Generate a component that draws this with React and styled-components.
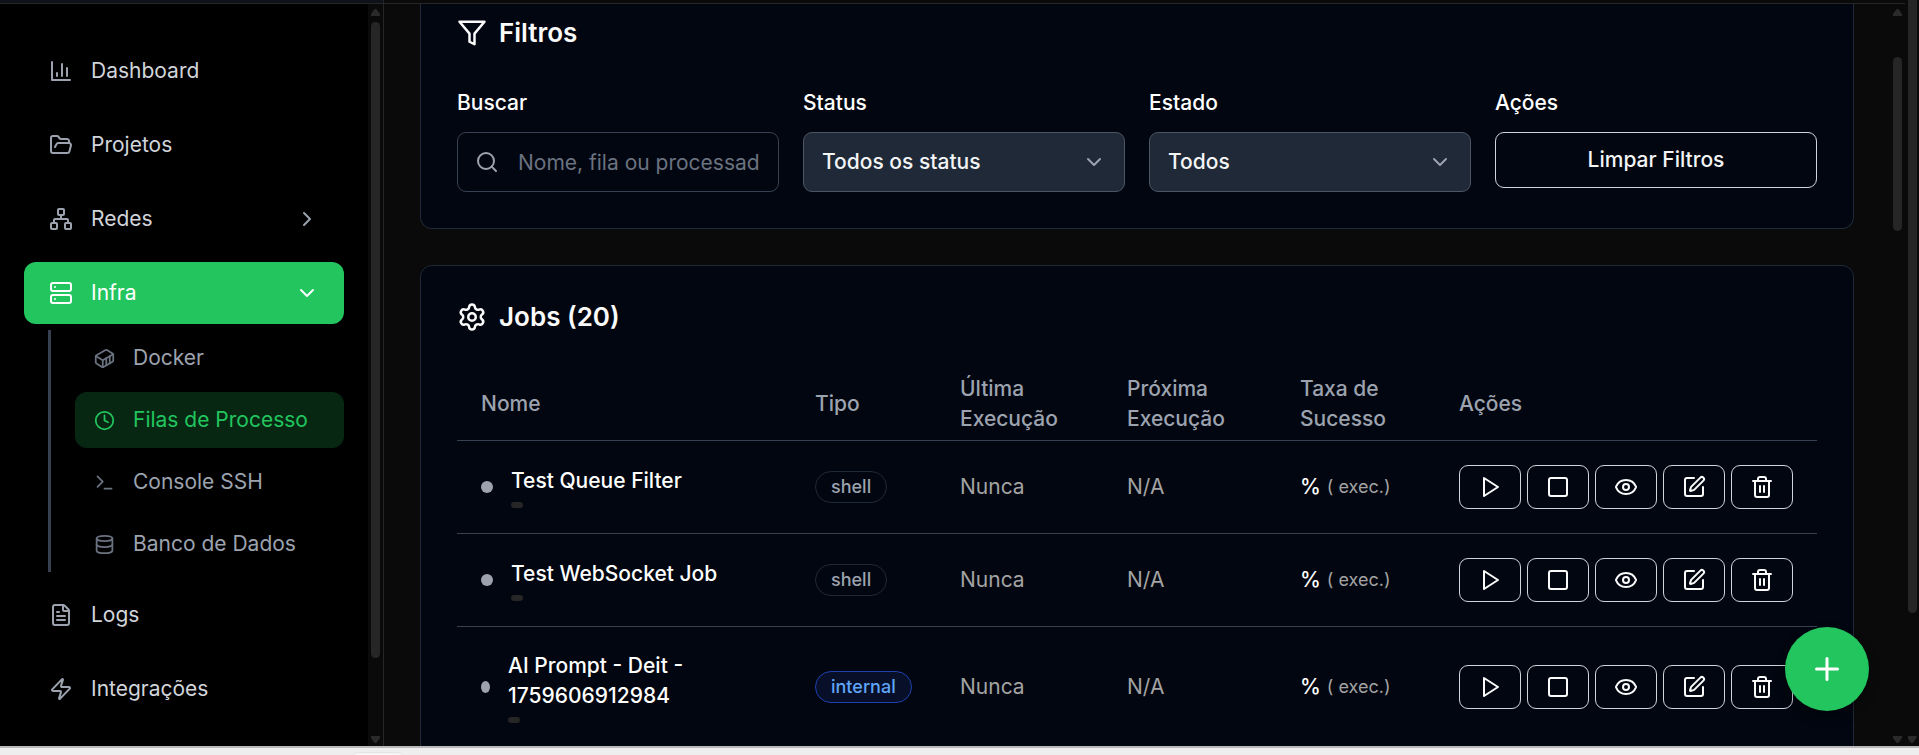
import React from "react";
import styled, { createGlobalStyle, css } from "styled-components";
import {
  FolderOpen, Network, Server, Container, Clock, Terminal, Database,
  FileText, Zap, ChevronRight, ChevronDown, Settings, Search, Square, Eye,
  SquarePen, Trash2, Plus,
} from "lucide-react";

const GlobalStyle = createGlobalStyle`
  *, *::before, *::after { box-sizing: border-box; }
  body {
    margin: 0;
    background: #0a0a0a;
    color: #fafafa;
    font-family: Inter, "Liberation Sans", sans-serif;
    font-size: 21px;
    line-height: 30px;
    overflow: hidden;
  }
  button, input, select { font: inherit; color: inherit; }
  svg { flex-shrink: 0; display: block; }
`;

const Page = styled.div`
  display: flex;
  flex-direction: column;
  height: 100vh;
`;

const Window = styled.div`
  flex: 1;
  min-height: 0;
  display: flex;
`;

const Shell = styled.div`
  flex: 1;
  min-width: 0;
  display: flex;
  flex-direction: column;
`;

const TopEdge = styled.div`
  display: flex;
  height: 4px;
  border-bottom: 1px solid #262626;
`;

const TopEdgeBrand = styled.div`
  width: 384px;
  background: #0d1318;
  border-right: 1px solid #262626;
`;

const Body = styled.div`
  flex: 1;
  min-height: 0;
  display: flex;
`;

const Sidebar = styled.aside`
  width: 384px;
  flex-shrink: 0;
  display: flex;
  background: #000;
  border-right: 1px solid #262626;
`;

const Nav = styled.nav`
  flex: 1;
  min-width: 0;
  display: flex;
  flex-direction: column;
  gap: 12px;
  padding: 36px 24px;
  overflow: hidden;
`;

const NavLink = styled.a`
  display: flex;
  align-items: center;
  gap: 18px;
  flex-shrink: 0;
  height: 62px;
  padding: 0 25px;
  border-radius: 12px;
  color: ${(p) => (p.$active ? "#fff" : "#d1d5db")};
  background: ${(p) => (p.$active ? "#22c55e" : "transparent")};
  text-decoration: none;

  span { flex: 1; }
  svg { color: ${(p) => (p.$active ? "#fff" : "#9ca3af")}; }
`;

const NavGroup = styled.div`
  display: flex;
  flex-direction: column;
  gap: 6px;
`;

const SubNav = styled.div`
  display: flex;
  flex-direction: column;
  gap: 6px;
  margin-left: 24px;
  padding-left: 24px;
  border-left: 3px solid #374151;
`;

const SubLink = styled.a`
  display: flex;
  align-items: center;
  gap: 18px;
  height: 56px;
  padding: 0 19px;
  border-radius: 12px;
  color: ${(p) => (p.$active ? "#22c55e" : "#9ca3af")};
  background: ${(p) => (p.$active ? "rgba(34, 197, 94, 0.2)" : "transparent")};
  text-decoration: none;

  svg { color: ${(p) => (p.$active ? "#22c55e" : "#6b7280")}; }
`;

const Track = styled.div`
  width: 15px;
  flex-shrink: 0;
  display: flex;
  flex-direction: column;
  align-items: center;
  padding: 5px 0 3px;
  background: #0a0a0a;
  ${(p) => p.$flush && css`
    width: 14px;
    padding-top: 0;
  `}
`;

const Arrow = styled.i`
  width: 9px;
  height: 7px;
  background: #2a2a2a;
  clip-path: ${(p) =>
    p.$down
      ? "polygon(0 0, 100% 0, 100% 30%, 60% 100%, 40% 100%, 0 30%)"
      : "polygon(40% 0, 60% 0, 100% 70%, 100% 100%, 0 100%, 0 70%)"};
`;

const Rail = styled.div`
  flex: 1;
  width: 9px;
  display: flex;
  flex-direction: column;
  margin: ${(p) => (p.$flush ? "0 0 6px" : "6px 0")};
`;

const RailGap = styled.span`
  flex: ${(p) => p.$share} 0 0;
`;

const Thumb = styled.span`
  flex: ${(p) => p.$share} 0 0;
  background: #262626;
  border-radius: ${(p) => (p.$flush ? "0 0 5px 5px" : "5px")};
`;

const Main = styled.main`
  flex: 1;
  min-width: 0;
  display: flex;
  flex-direction: column;
  gap: 36px;
  padding: 0 36px;
  overflow: hidden;
`;

const Card = styled.section`
  flex-shrink: 0;
  padding: 36px;
  background: #020610;
  border: 1px solid #1f2937;
  border-radius: 12px;
  ${(p) =>
    p.$cut &&
    css`
      border-top: 0;
      border-top-left-radius: 0;
      border-top-right-radius: 0;
      padding-top: 14px;
    `}
`;

const CardTitle = styled.h2`
  display: flex;
  align-items: center;
  gap: 12px;
  margin: 0 0 36px;
  font-size: 26px;
  line-height: 30px;
  font-weight: 600;
`;

const Filters = styled.div`
  display: grid;
  grid-template-columns: repeat(4, 1fr);
  gap: 24px;
  align-items: start;
  padding-top: 4px;
`;

const Field = styled.div`
  display: flex;
  flex-direction: column;
  gap: 14px;
  min-width: 0;
`;

const labelText = css`
  font-weight: 500;
  color: #fff;
`;

const Label = styled.label`
  ${labelText}
`;

const LabelText = styled.span`
  ${labelText}
`;

const Control = styled.div`
  position: relative;

  svg {
    position: absolute;
    top: 18px;
    pointer-events: none;
    color: #9ca3af;
  }
`;

const SearchIcon = styled(Search)`
  left: 18px;
`;

const SelectIcon = styled(ChevronDown)`
  right: 19px;
`;

const TextInput = styled.input`
  display: block;
  width: 100%;
  height: 60px;
  padding: 0 18px 0 60px;
  background: transparent;
  border: 1px solid #374151;
  border-radius: 9px;

  &::placeholder { color: #6b7280; opacity: 1; }
`;

const Select = styled.select`
  display: block;
  width: 100%;
  height: 60px;
  padding: 0 60px 0 18px;
  appearance: none;
  background: #1f2937;
  border: 1px solid #4b5563;
  border-radius: 9px;
  font-weight: 500;
  color: #f3f4f6;
`;

const OutlineButton = styled.button`
  display: flex;
  align-items: center;
  justify-content: center;
  height: 56px;
  background: transparent;
  border: 1px solid #d1d5db;
  border-radius: 9px;
  font-weight: 500;
  color: #f3f4f6;
`;

const Table = styled.table`
  width: 100%;
  table-layout: fixed;
  border-collapse: separate;
  border-spacing: 0;
`;

const Col = styled.col`
  width: ${(p) => p.$w};
`;

const Th = styled.th`
  height: 73px;
  padding: 0 24px;
  text-align: left;
  font-weight: 500;
  color: #9ca3af;
  border-bottom: 1px solid #374151;
`;

const Td = styled.td`
  padding: 24px;
  color: #a3a3a3;
  border-bottom: 1px solid #374151;
  vertical-align: middle;
`;

const NameCell = styled.div`
  display: flex;
  align-items: center;
  gap: 18px;
`;

const Dot = styled.span`
  width: 12px;
  height: 12px;
  border-radius: 50%;
  background: #9ca3af;
`;

const NameBlock = styled.div`
  display: flex;
  flex-direction: column;
  align-items: flex-start;
  gap: 6px;
`;

const JobName = styled.div`
  font-weight: 500;
  color: #fff;
`;

const QueueTag = styled.code`
  width: 12px;
  height: 6px;
  border-radius: 3px;
  background: #262626;
`;

const Badge = styled.span`
  display: flex;
  width: fit-content;
  padding: 3px 15px;
  border-radius: 16px;
  border: 1px solid ${(p) => (p.$blue ? "#1e40af" : "#1f2937")};
  background: ${(p) => (p.$blue ? "rgba(30, 58, 138, 0.2)" : "transparent")};
  color: ${(p) => (p.$blue ? "#60a5fa" : "#9ca3af")};
  font-size: 18px;
  line-height: 24px;
  font-weight: 500;
`;

const Rate = styled.div`
  display: flex;
  align-items: center;
  gap: 6px;
  white-space: pre;

  strong { font-weight: 500; color: #fff; }
  small { font-size: 18px; }
`;

const Actions = styled.div`
  display: flex;
  gap: 6px;
`;

const IconButton = styled.button`
  display: flex;
  align-items: center;
  justify-content: center;
  width: 62px;
  height: 44px;
  padding: 0;
  background: transparent;
  border: 1px solid #d1d5db;
  border-radius: 9px;
  color: #fafafa;
`;

const Fab = styled.button`
  position: fixed;
  right: 50px;
  bottom: 44px;
  display: flex;
  align-items: center;
  justify-content: center;
  width: 84px;
  height: 84px;
  padding: 0;
  border: 0;
  border-radius: 50%;
  background: #22c55e;
  color: #fff;
  box-shadow: 0 6px 12px rgba(0, 0, 0, 0.3);
`;

const BottomEdge = styled.footer`
  height: 9px;
  flex-shrink: 0;
  padding: 4px 0 0 352px;
  overflow: hidden;
  background: #eee;
  border-top: 2px solid #bbb8bb;
`;

const EdgeTab = styled.div`
  width: 52px;
  height: 12px;
  border: 1px solid #e4e4e4;
  border-radius: 6px;
  background: #f6f6f6;
`;

function Icon({ children, size = 24 }) {
  return (
    <svg width={size} height={size} viewBox="0 0 24 24" fill="none" stroke="currentColor"
      strokeWidth="2" strokeLinecap="round" strokeLinejoin="round" aria-hidden="true">
      {children}
    </svg>
  );
}

const ChartIcon = () => (
  <Icon>
    <path d="M3 3v18h18" />
    <path d="M18 17V9" />
    <path d="M13 17V5" />
    <path d="M8 17v-3" />
  </Icon>
);

const FunnelIcon = () => (
  <Icon size={30}>
    <polygon points="22 3 2 3 10 12.46 10 19 14 21 14 12.46 22 3" />
  </Icon>
);

const PlayIcon = () => (
  <Icon>
    <polygon points="6 3 20 12 6 21 6 3" />
  </Icon>
);

function ScrollTrack({ before, thumb, after, flush }) {
  return (
    <Track $flush={flush} aria-hidden="true">
      {!flush && <Arrow />}
      <Rail $flush={flush}>
        {before > 0 && <RailGap $share={before} />}
        <Thumb $share={thumb} $flush={flush} />
        <RailGap $share={after} />
      </Rail>
      <Arrow $down />
    </Track>
  );
}

const subItems = [
  { label: "Docker", icon: Container },
  { label: "Filas de Processo", icon: Clock, active: true },
  { label: "Console SSH", icon: Terminal },
  { label: "Banco de Dados", icon: Database },
];

const jobs = [
  { name: "Test Queue Filter", type: "shell" },
  { name: "Test WebSocket Job", type: "shell" },
  { name: "AI Prompt - Deit - 1759606912984", type: "internal" },
];

const actions = [
  { label: "Executar", icon: PlayIcon },
  { label: "Parar", icon: Square },
  { label: "Ver", icon: Eye },
  { label: "Editar", icon: SquarePen },
  { label: "Excluir", icon: Trash2 },
];

export default function App() {
  return (
    <Page>
      <GlobalStyle />
      <Window>
        <Shell>
          <TopEdge><TopEdgeBrand /></TopEdge>
          <Body>
            <Sidebar>
              <Nav>
                <NavLink href="#dashboard"><ChartIcon /><span>Dashboard</span></NavLink>
                <NavLink href="#projetos"><FolderOpen /><span>Projetos</span></NavLink>
                <NavLink href="#redes"><Network /><span>Redes</span><ChevronRight /></NavLink>
                <NavGroup>
                  <NavLink href="#infra" $active><Server /><span>Infra</span><ChevronDown /></NavLink>
                  <SubNav>
                    {subItems.map(({ label, icon: I, active }) => (
                      <SubLink key={label} href="#infra" $active={active}>
                        <I size={21} />{label}
                      </SubLink>
                    ))}
                  </SubNav>
                </NavGroup>
                <NavLink href="#logs"><FileText /><span>Logs</span></NavLink>
                <NavLink href="#integracoes"><Zap /><span>Integrações</span></NavLink>
              </Nav>
              <ScrollTrack before={0} thumb={636} after={72} />
            </Sidebar>
            <Main>
              <Card $cut>
                <CardTitle><FunnelIcon />Filtros</CardTitle>
                <Filters>
                  <Field>
                    <Label htmlFor="buscar">Buscar</Label>
                    <Control>
                      <SearchIcon />
                      <TextInput id="buscar" placeholder="Nome, fila ou processador..." />
                    </Control>
                  </Field>
                  <Field>
                    <Label htmlFor="status">Status</Label>
                    <Control>
                      <Select id="status"><option>Todos os status</option></Select>
                      <SelectIcon />
                    </Control>
                  </Field>
                  <Field>
                    <Label htmlFor="estado">Estado</Label>
                    <Control>
                      <Select id="estado"><option>Todos</option></Select>
                      <SelectIcon />
                    </Control>
                  </Field>
                  <Field>
                    <LabelText>Ações</LabelText>
                    <OutlineButton type="button">Limpar Filtros</OutlineButton>
                  </Field>
                </Filters>
              </Card>
              <Card>
                <CardTitle><Settings size={30} />Jobs (20)</CardTitle>
                <Table>
                  <colgroup>
                    <Col $w="auto" /><Col $w="145px" /><Col $w="167px" />
                    <Col $w="173px" /><Col $w="159px" /><Col $w="382px" />
                  </colgroup>
                  <thead>
                    <tr>
                      <Th>Nome</Th><Th>Tipo</Th><Th>Última Execução</Th>
                      <Th>Próxima Execução</Th><Th>Taxa de Sucesso</Th><Th>Ações</Th>
                    </tr>
                  </thead>
                  <tbody>
                    {jobs.map((job) => (
                      <tr key={job.name}>
                        <Td>
                          <NameCell>
                            <Dot />
                            <NameBlock>
                              <JobName>{job.name}</JobName>
                              <QueueTag />
                            </NameBlock>
                          </NameCell>
                        </Td>
                        <Td><Badge $blue={job.type === "internal"}>{job.type}</Badge></Td>
                        <Td>Nunca</Td>
                        <Td>N/A</Td>
                        <Td><Rate><strong>%</strong><small>( exec.)</small></Rate></Td>
                        <Td>
                          <Actions>
                            {actions.map(({ label, icon: I }) => (
                              <IconButton key={label} type="button" aria-label={label}><I /></IconButton>
                            ))}
                          </Actions>
                        </Td>
                      </tr>
                    ))}
                  </tbody>
                </Table>
              </Card>
            </Main>
            <ScrollTrack before={35} thumb={174} after={499} />
          </Body>
        </Shell>
        <ScrollTrack flush before={0} thumb={614} after={117} />
      </Window>
      <BottomEdge><EdgeTab /></BottomEdge>
      <Fab type="button" aria-label="Novo job"><Plus size={36} /></Fab>
    </Page>
  );
}
